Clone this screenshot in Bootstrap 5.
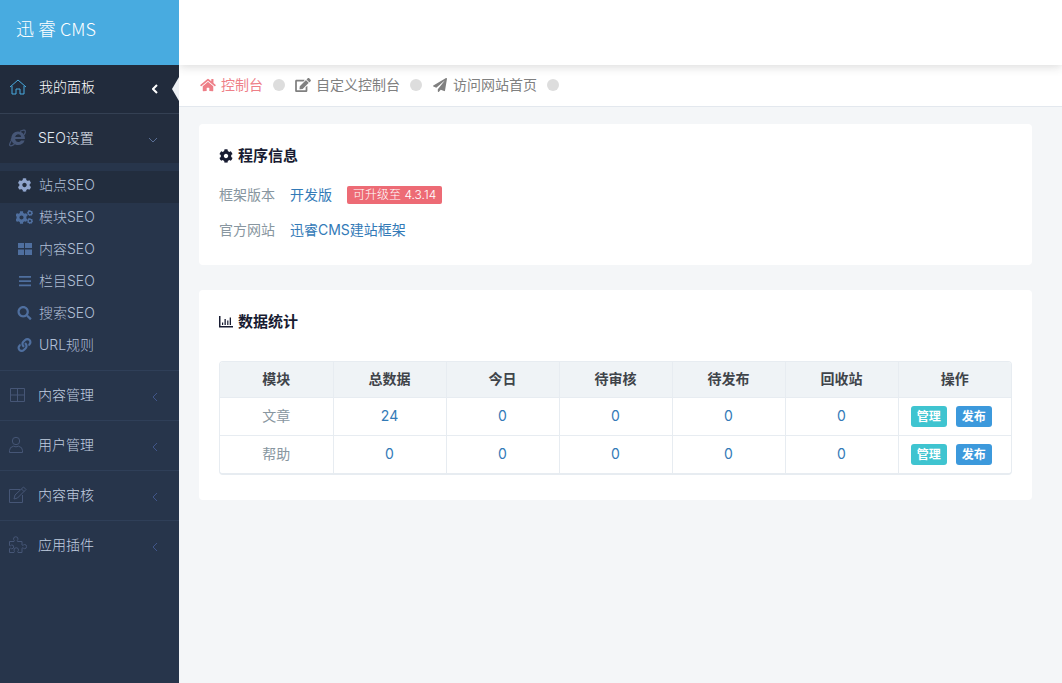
<!DOCTYPE html>
<html lang="zh-CN">
<head>
<meta charset="utf-8">
<meta name="viewport" content="width=device-width, initial-scale=1">
<title>迅睿 CMS</title>
<link href="https://cdn.jsdelivr.net/npm/bootstrap@5.3.0/dist/css/bootstrap.min.css" rel="stylesheet">
<style>
body{font:14px/20px Inter,"Noto Sans CJK SC",sans-serif;background:#f4f6f8;color:#8896a0}
a{text-decoration:none;color:#337ab7}
svg{display:block;flex:none;fill:currentColor}
.line-icon{fill:none;stroke:currentColor;stroke-width:1}
.side{width:179px;background:#27354b;font-weight:300}
.brand{height:65px;background:#48abe0;color:#fff;font-family:"Noto Sans CJK SC",sans-serif;font-size:18px;font-weight:300;padding:0 16px 10px;gap:4px}
.side-link{height:50px;padding:0 21px 2px 8px;border-top:1px solid #2f3f58;color:#c1cee0}
.side-link .line-icon,.side-link .ie{color:#465676;margin-right:11px}
.side-link .arrow{margin:5px 0 0;color:#41568a}
.side-link.current{height:48px;border-top:0;padding-bottom:5px;background:#212b3c;color:#fff}
.side-link.current .line-icon{color:#48abe0}
.side-link.current .arrow{color:#fff;stroke-width:2}
.side-link.open{background:#232d3e;border-color:#344053;color:#e4ebf5}
.side-link.open .arrow{color:#5a6e94}
.notch{top:12px;width:7px;height:24px;background:#eef1f5;clip-path:polygon(100% 0,0 50%,100% 100%)}
.sub{padding:8px 0 7px}
.sub a{height:32px;padding:0 16px 4px;gap:6px;color:#b0bfd6}
.sub svg{color:#4f6f9f}
.sub a.on{background:#222d3e}
.sub a.on svg{color:#90a5cd}
.top{height:65px;background:#fff;box-shadow:0 1px 10px rgba(50,50,50,.2)}
.tabs{height:42px;background:#fff;border-bottom:1px solid #e3e8ee;padding:0 21px 2px}
.tabs a{color:#808080;gap:5px}
.tabs a.on{color:#ee7f88}
.dot{width:12px;height:12px;border-radius:50%;background:#ddd;margin:0 10px}
.main-pad{padding:17px 30px 17px 20px}
.panel-box{background:#fff;border-radius:4px;padding:22px 20px 25px;margin-bottom:25px}
.panel-box h2{font-size:15px;line-height:20px;font-weight:600;color:#181c32;gap:5px;margin:0 0 11px}
.panel-box.about{padding-bottom:18px}
.info{height:35px;gap:15px}
.tag{background:#ed6b75;color:#fff;font-size:12px;line-height:18px;padding:0 6px;border-radius:2px;font-weight:300}
.grid-wrap{border:1px solid #e7ecf1;border-bottom-width:2px;border-radius:4px;margin-top:29px;overflow:hidden}
.grid{width:100%;table-layout:fixed;text-align:center}
.grid th{height:35px;background:#eff3f6;color:#3f444a;font-weight:600}
.grid td{height:38px;border-top:1px solid #e7ecf1}
.grid th+th,.grid td+td{border-left:1px solid #e7ecf1}
.acts{gap:9px;padding-right:7px}
.mini{border:0;border-radius:3px;color:#fff;font-size:12px;font-weight:600;line-height:18px;height:21px;width:36px;padding:2px 0 1px}
.teal{background:#3fc4d0}.blue{background:#3c99dc}
</style>
</head>
<body>
<svg width="0" height="0" class="position-absolute" aria-hidden="true">
<symbol id="cog" viewBox="0 0 512 512"><path d="M487.4 315.7l-42.6-24.6c4.3-23.2 4.3-47 0-70.2l42.6-24.6c4.9-2.8 7.1-8.6 5.5-14-11.1-35.6-30-67.8-54.7-94.6-3.8-4.1-10-5.1-14.8-2.3L380.8 110c-17.9-15.4-38.5-27.3-60.8-35.1V25.8c0-5.6-3.9-10.5-9.4-11.7-36.7-8.2-74.3-7.8-109.2 0-5.5 1.2-9.4 6.1-9.4 11.7V75c-22.2 7.9-42.8 19.8-60.8 35.1L88.7 85.5c-4.9-2.8-11-1.9-14.8 2.3-24.7 26.7-43.6 58.9-54.7 94.6-1.7 5.4.6 11.2 5.5 14L67.3 221c-4.3 23.2-4.3 47 0 70.2l-42.6 24.6c-4.9 2.8-7.1 8.6-5.5 14 11.1 35.6 30 67.8 54.7 94.6 3.8 4.1 10 5.1 14.8 2.3l42.6-24.6c17.9 15.4 38.5 27.3 60.8 35.1v49.2c0 5.6 3.9 10.5 9.4 11.7 36.7 8.2 74.3 7.8 109.2 0 5.5-1.2 9.4-6.1 9.4-11.7v-49.2c22.2-7.9 42.8-19.8 60.8-35.1l42.6 24.6c4.9 2.8 11 1.9 14.8-2.3 24.7-26.7 43.6-58.9 54.7-94.6 1.5-5.5-.7-11.3-5.6-14.1zM256 336c-44.1 0-80-35.9-80-80s35.9-80 80-80 80 35.9 80 80-35.9 80-80 80z"/></symbol>
<symbol id="left" viewBox="0 0 6 10"><path d="M5 1L1 5l4 4"/></symbol>
</svg>
<div class="d-flex min-vh-100">
<aside class="side flex-shrink-0">
  <a href="#" class="brand d-flex align-items-center"><span>迅</span><span>睿</span><span>CMS</span></a>
  <nav>
    <a href="#" class="side-link current d-flex align-items-center position-relative">
      <svg class="line-icon" width="20" height="16" viewBox="0 0 20 16"><path d="M2 8l8-7 8 7M4 7v8h4v-5h4v5h4V7"/></svg>
      <span class="flex-grow-1">我的面板</span>
      <svg class="line-icon arrow" width="6" height="10"><use href="#left"/></svg>
      <span class="notch position-absolute end-0"></span>
    </a>
    <a href="#" class="side-link open d-flex align-items-center">
      <svg class="ie" width="19" height="18" viewBox="0 0 19 18"><path fill-rule="evenodd" d="M10 2.5c4.400 0 7 3 7 7.500H7.200c.2 2 1.300 3 3.100 3 1.400 0 2.300-.7 2.800-1.500h3.500c-1 2.900-3.200 4.500-6.400 4.500C6 16 3.400 13.500 3.400 9.500c0-4 2.600-7 6.600-7zM7.200 8h5.900c-.2-1.700-1.200-2.700-2.900-2.700S7.500 6.300 7.200 8z"/><path d="M4 10.500C1 15 1 17 3 16.800c1 0 2-.6 3.500-1.500M12 2.400c3-1.500 5-1.700 5.300-.5.300 1-.3 2.700-1.200 4M9 4.500C6.500 6 4.500 8.500 3 11" fill="none" stroke="currentColor" stroke-width="1.200"/></svg>
      <span class="flex-grow-1">SEO设置</span>
      <svg class="line-icon arrow" width="10" height="6" viewBox="0 0 10 6"><path d="M1 1l4 4 4-4"/></svg>
    </a>
    <div class="sub">
      <a href="#" class="on d-flex align-items-center"><svg width="17" height="14"><use href="#cog"/></svg>站点SEO</a>
      <a href="#" class="d-flex align-items-center"><svg width="17" height="14" viewBox="0 0 17 14"><use href="#cog" x="-1" y="1" width="13" height="13"/><path fill-rule="evenodd" d="M14 0l1 .9 1.400.1.1 1.400.6 1-.9 1-.3 1.100H14.500l-1 .4-1-.9-1.200-.3.2-1.300-.5-1.100.9-.9.300-1.200 1.200.1zM14 1.900a1.100 1.100 0 100 2.200 1.100 1.100 0 000-2.200zM14 8l1 .9 1.400.1.1 1.400.6 1-.9 1-.3 1.100H14.500l-1 .4-1-.9-1.200-.3.2-1.300-.5-1.100.9-.9.300-1.200 1.200.1zM14 9.900a1.100 1.100 0 100 2.200 1.100 1.100 0 000-2.200z"/></svg>模块SEO</a>
      <a href="#" class="d-flex align-items-center"><svg width="17" height="14" viewBox="0 0 17 14"><path d="M2 1h6v5H2zM9 1h7v5H9zM2 7.500h6V13H2zM9 7.500h7V13H9z"/></svg>内容SEO</a>
      <a href="#" class="d-flex align-items-center"><svg width="17" height="14" viewBox="0 0 17 14"><path d="M3 2h12v1.700H3zM3 6.200h12V8H3zM3 10.500h12v1.700H3z"/></svg>栏目SEO</a>
      <a href="#" class="d-flex align-items-center"><svg width="17" height="14" viewBox="0 0 512 512"><path d="M505 442.700L405.300 343c-4.500-4.500-10.600-7-17-7H372c27.600-35.300 44-79.700 44-128C416 93.100 322.900 0 208 0S0 93.100 0 208s93.100 208 208 208c48.300 0 92.700-16.400 128-44v16.300c0 6.400 2.500 12.500 7 17l99.700 99.700c9.400 9.400 24.600 9.400 33.900 0l28.300-28.300c9.400-9.400 9.400-24.600.1-34zM208 336c-70.700 0-128-57.200-128-128 0-70.700 57.200-128 128-128 70.700 0 128 57.200 128 128 0 70.700-57.200 128-128 128z"/></svg>搜索SEO</a>
      <a href="#" class="d-flex align-items-center"><svg width="17" height="14" viewBox="0 0 512 512"><path d="M326.612 185.391c59.747 59.809 58.927 155.698.36 214.590-.11.12-.24.25-.36.37l-67.200 67.200c-59.270 59.270-155.699 59.262-214.960 0-59.270-59.260-59.270-155.700 0-214.960l37.106-37.106c9.840-9.840 26.786-3.300 27.294 10.606.648 17.722 3.826 35.527 9.690 52.721 1.986 5.822.567 12.262-3.783 16.612l-13.087 13.087c-28.026 28.026-28.905 73.660-1.155 101.960 28.024 28.579 74.086 28.749 102.325.51l67.200-67.190c28.191-28.191 28.073-73.757 0-101.830-3.701-3.694-7.429-6.564-10.341-8.569a16.037 16.037 0 0 1-6.947-12.606c-.396-10.567 3.348-21.456 11.698-29.806l21.054-21.055c5.521-5.521 14.182-6.199 20.584-1.731a152.482 152.482 0 0 1 20.522 17.197zM467.547 44.449c-59.261-59.262-155.690-59.270-214.960 0l-67.200 67.200c-.12.12-.25.25-.36.37-58.566 58.892-59.387 154.781.36 214.590a152.454 152.454 0 0 0 20.521 17.196c6.402 4.468 15.064 3.789 20.584-1.731l21.054-21.055c8.350-8.350 12.094-19.239 11.698-29.806a16.037 16.037 0 0 0-6.947-12.606c-2.912-2.005-6.640-4.875-10.341-8.569-28.073-28.073-28.191-73.639 0-101.830l67.200-67.190c28.239-28.239 74.300-28.069 102.325.51 27.750 28.300 26.872 73.934-1.155 101.960l-13.087 13.087c-4.350 4.350-5.769 10.790-3.783 16.612 5.864 17.194 9.042 34.999 9.690 52.721.509 13.906 17.454 20.446 27.294 10.606l37.106-37.106c59.271-59.259 59.271-155.699.001-214.959z"/></svg>URL规则</a>
    </div>
    <a href="#" class="side-link d-flex align-items-center"><svg class="line-icon" width="19" height="18" viewBox="0 0 19 18"><path d="M2.500 2.500h14v13h-14zM2 9h15M9.500 2v14"/></svg><span class="flex-grow-1">内容管理</span><svg class="line-icon arrow" width="6" height="10"><use href="#left"/></svg></a>
    <a href="#" class="side-link d-flex align-items-center"><svg class="line-icon" width="19" height="18" viewBox="0 0 19 18"><circle cx="8" cy="5" r="3.700"/><path d="M1.500 16.500v-2q0-3.500 4-4.300 2.500 1.300 5 0 4 .8 4 4.300v2z"/></svg><span class="flex-grow-1">用户管理</span><svg class="line-icon arrow" width="6" height="10"><use href="#left"/></svg></a>
    <a href="#" class="side-link d-flex align-items-center"><svg class="line-icon" width="19" height="18" viewBox="0 0 19 18"><path d="M12 3.500H1.500v13h13V9M6 13l1-4 8.500-8 2.500 2.500L9.500 12zM13.500 3L16 5.500"/></svg><span class="flex-grow-1">内容审核</span><svg class="line-icon arrow" width="6" height="10"><use href="#left"/></svg></a>
    <a href="#" class="side-link d-flex align-items-center"><svg class="line-icon" width="19" height="18" viewBox="0 0 19 18"><path d="M1.500 5.500H6C7 4.500 5.500 4 5.500 3a2.200 2.200 0 014.500 0c0 1-1.500 1.500-.5 2.500h4.500V9c1 1 1.500-.5 2.500-.5a2.100 2.100 0 010 4.200c-1 0-1.500-1.500-2.500-.5v4.300H10c-1-1 .5-1.500.5-2.500a2.200 2.200 0 00-4.500 0c0 1 1 1.500 0 2.500H1.500v-4c1-1 1.500.3 2.300.3a1.900 1.900 0 000-3.800c-.8 0-1.300 1.500-2.300.5z"/></svg><span class="flex-grow-1">应用插件</span><svg class="line-icon arrow" width="6" height="10"><use href="#left"/></svg></a>
  </nav>
</aside>
<div class="flex-grow-1 overflow-hidden">
  <header class="top position-relative"></header>
  <nav class="tabs d-flex align-items-center">
    <a href="#" class="on d-flex align-items-center"><svg width="16" height="14" viewBox="0 0 576 512"><path d="M280.370 148.260L96 300.110V464a16 16 0 0 0 16 16l112.060-.29a16 16 0 0 0 15.920-16V368a16 16 0 0 1 16-16h64a16 16 0 0 1 16 16v95.640a16 16 0 0 0 16 16.050L464 480a16 16 0 0 0 16-16V300L295.670 148.260a12.190 12.190 0 0 0-15.300 0zM571.600 251.470L488 182.560V44.050a12 12 0 0 0-12-12h-56a12 12 0 0 0-12 12v72.610L318.470 43a48 48 0 0 0-61 0L4.340 251.470a12 12 0 0 0-1.600 16.900l25.500 31A12 12 0 0 0 45.150 301l235.220-193.740a12.190 12.190 0 0 1 15.300 0L530.900 301a12 12 0 0 0 16.900-1.600l25.500-31a12 12 0 0 0-1.700-16.930z"/></svg>控制台</a><span class="dot"></span>
    <a href="#" class="d-flex align-items-center"><svg width="16" height="14" viewBox="0 0 576 512"><path d="M402.600 83.200l90.200 90.200c3.800 3.800 3.800 10 0 13.800L274.400 405.600l-92.800 10.300c-12.400 1.400-22.900-9.100-21.500-21.500l10.300-92.800L388.800 83.200c3.800-3.800 10-3.800 13.800 0zm162-22.900l-48.800-48.800c-15.200-15.200-39.900-15.200-55.200 0l-35.400 35.400c-3.800 3.800-3.800 10 0 13.800l90.200 90.200c3.800 3.800 10 3.800 13.800 0l35.400-35.400c15.200-15.300 15.200-40 0-55.200zM384 346.200V448H64V128h229.800c3.200 0 6.200-1.300 8.500-3.500l40-40c7.600-7.600 2.200-20.500-8.500-20.500H48C21.500 64 0 85.500 0 112v352c0 26.500 21.500 48 48 48h352c26.500 0 48-21.500 48-48V306.200c0-10.700-12.900-16-20.500-8.500l-40 40c-2.200 2.300-3.500 5.300-3.500 8.500z"/></svg>自定义控制台</a><span class="dot"></span>
    <a href="#" class="d-flex align-items-center"><svg width="16" height="14" viewBox="0 0 512 512"><path d="M476 3.200L12.500 270.600c-18.100 10.400-15.800 35.600 2.200 43.200L121 358.400l287.300-253.200c5.500-4.900 13.300 2.600 8.600 8.300L176 407v80.500c0 23.600 28.500 32.900 42.500 15.800L282 426l124.600 52.200c14.200 6 30.400-2.900 33-18.200l72-432C515 7.800 493.300-6.800 476 3.200z"/></svg>访问网站首页</a><span class="dot"></span>
  </nav>
  <main class="main-pad">
    <section class="panel-box about">
      <h2 class="d-flex align-items-center"><svg width="14" height="14"><use href="#cog"/></svg>程序信息</h2>
      <div class="info d-flex align-items-center"><span>框架版本</span><a href="#">开发版</a><a href="#" class="tag">可升级至 4.3.14</a></div>
      <div class="info d-flex align-items-center"><span>官方网站</span><a href="#">迅睿CMS建站框架</a></div>
    </section>
    <section class="panel-box mb-0">
      <h2 class="d-flex align-items-center"><svg width="14" height="14" viewBox="0 0 14 14"><path d="M0 1h1.500v10H14v1.500H0zM3 7.500h1.200V10H3zM5.500 4h1.300v6H5.500zM8.200 5.500h1.200V10H8.200zM10.700 2.500H12V10h-1.300z"/></svg>数据统计</h2>
      <div class="grid-wrap">
      <table class="grid">
        <thead><tr><th>模块</th><th>总数据</th><th>今日</th><th>待审核</th><th>待发布</th><th>回收站</th><th>操作</th></tr></thead>
        <tbody>
        <tr><td>文章</td><td><a href="#">24</a></td><td><a href="#">0</a></td><td><a href="#">0</a></td><td><a href="#">0</a></td><td><a href="#">0</a></td><td><div class="acts d-flex justify-content-center"><button type="button" class="mini teal">管理</button><button type="button" class="mini blue">发布</button></div></td></tr>
        <tr><td>帮助</td><td><a href="#">0</a></td><td><a href="#">0</a></td><td><a href="#">0</a></td><td><a href="#">0</a></td><td><a href="#">0</a></td><td><div class="acts d-flex justify-content-center"><button type="button" class="mini teal">管理</button><button type="button" class="mini blue">发布</button></div></td></tr>
        </tbody>
      </table>
      </div>
    </section>
  </main>
</div>
</div>
<script src="https://cdn.jsdelivr.net/npm/bootstrap@5.3.0/dist/js/bootstrap.bundle.min.js"></script>
</body>
</html>
